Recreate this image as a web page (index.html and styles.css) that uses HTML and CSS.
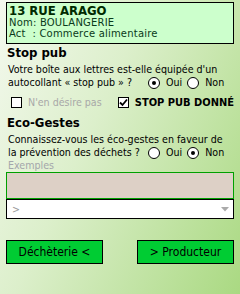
FILE: index.html
```html
<!DOCTYPE html>
<html lang="fr">
<head>
    <meta charset="UTF-8">
    <title>Fiche</title>
    <link rel="stylesheet" href="styles.css">
</head>
<body>
    <div class="page">
        <!-- adresse -->
        <div class="head">
            <div class="title">13 RUE ARAGO</div>
            <div class="info">Nom: BOULANGERIE</div>
            <div class="info">Act&nbsp; : Commerce alimentaire</div>
        </div>

        <!-- stop pub -->
        <h2>Stop pub</h2>
        <p class="q">Votre boîte aux lettres est-elle équipée d'un</p>
        <div class="q-row">
            <span class="q-text">autocollant « stop pub » ?</span>
            <span class="choice"><i class="radio on"></i>Oui</span>
            <span class="choice"><i class="radio"></i>Non</span>
        </div>
        <div class="checks">
            <span class="check-item off"><i class="box"></i>N'en désire pas</span>
            <span class="check-item strong"><i class="box"><svg width="9" height="9" viewBox="0 0 9 9"><path d="M1 4.5L3.5 7L8 1.5" fill="none" stroke="#000" stroke-width="1.8"/></svg></i>STOP PUB DONNÉ</span>
        </div>

        <!-- eco gestes -->
        <h2 class="eco">Eco-Gestes</h2>
        <p class="q">Connaissez-vous les éco-gestes en faveur de</p>
        <div class="q-row">
            <span class="q-text">la prévention des déchets ?</span>
            <span class="choice"><i class="radio"></i>Oui</span>
            <span class="choice"><i class="radio on"></i>Non</span>
        </div>
        <div class="label">Exemples</div>
        <div class="area"></div>
        <div class="select">
            <span>&gt;</span>
            <svg width="8" height="5" viewBox="0 0 8 5"><path d="M0 0H8L4 4.5Z" fill="#aaa"/></svg>
        </div>

        <div class="buttons">
            <button>Déchèterie &lt;</button>
            <button>&gt; Producteur</button>
        </div>
    </div>
</body>
</html>
```
FILE: styles.css
```css
html, body{
    margin: 0;
    height: 100%;
}
body{
    background: linear-gradient(115deg, #f4f9ee 0%, #dcefcb 40%, #aad982 100%);
    font-family: "DejaVu Sans Condensed", "DejaVu Sans", sans-serif;
    color: #000;
    font-size: 10.6px;
}
.page{
    padding: 2px 6px 0 6px;
}
.head{
    background: #ccffcc;
    border: 1px solid #000;
    padding: 1px 2px 0;
    height: 39px;
}
.title{
    font-weight: bold;
    font-size: 13px;
    color: #002a00;
    line-height: 14px;
}
.info{
    font-family: "DejaVu Sans", sans-serif;
    font-size: 10px;
    letter-spacing: 0.2px;
    color: #0a3a1a;
    line-height: 10.5px;
}
h2{
    margin: 1px 0 0 1px;
    font-size: 13px;
    font-weight: bold;
    line-height: 16px;
}
h2.eco{
    margin-top: 6px;
}
.q{
    margin: 2px 0 0 2px;
    line-height: 13px;
}
.q-row{
    display: flex;
    align-items: center;
    padding-left: 2px;
    line-height: 13px;
}
.q-text{
    flex: 0 0 140px;
}
.choice{
    display: flex;
    align-items: center;
}
.choice + .choice{
    margin-left: 5px;
}
.radio{
    width: 10px;
    height: 10px;
    border: 1px solid #000;
    border-radius: 50%;
    background: #fff;
    margin-right: 6px;
    position: relative;
}
.radio.on::after{
    content: "";
    position: absolute;
    left: 3px;
    top: 3px;
    width: 4px;
    height: 4px;
    border-radius: 50%;
    background: #000;
}
.checks{
    display: flex;
    margin: 7px 0 0 5px;
    line-height: 13px;
    white-space: nowrap;
}
.check-item{
    display: flex;
    align-items: center;
}
.check-item.off{
    color: #a8a8a8;
    width: 107px;
}
.check-item.strong{
    font-weight: bold;
    font-size: 11px;
}
.box{
    width: 11px;
    height: 11px;
    border: 1px solid #000;
    background: #fff;
    margin-right: 6px;
    display: flex;
    align-items: center;
    justify-content: center;
    box-sizing: border-box;
    flex: none;
}
.label{
    color: #a4a6ab;
    margin-left: 2px;
    line-height: 13px;
}
.area{
    height: 25px;
    background: #ddd0c6;
    border: 1px solid #00a000;
}
.select{
    height: 18px;
    border: 1px solid #000;
    background: #fff;
    display: flex;
    align-items: center;
    justify-content: space-between;
    padding: 0 4px 0 5px;
    color: #9a9a9a;
}
.buttons{
    display: flex;
    justify-content: space-between;
    margin-top: 21px;
}
button{
    width: 97px;
    height: 24px;
    background: #00cc33;
    border: 1px solid #000;
    font-family: "DejaVu Sans Condensed", "DejaVu Sans", sans-serif;
    font-size: 12px;
    color: #000;
    padding: 0;
}
```
